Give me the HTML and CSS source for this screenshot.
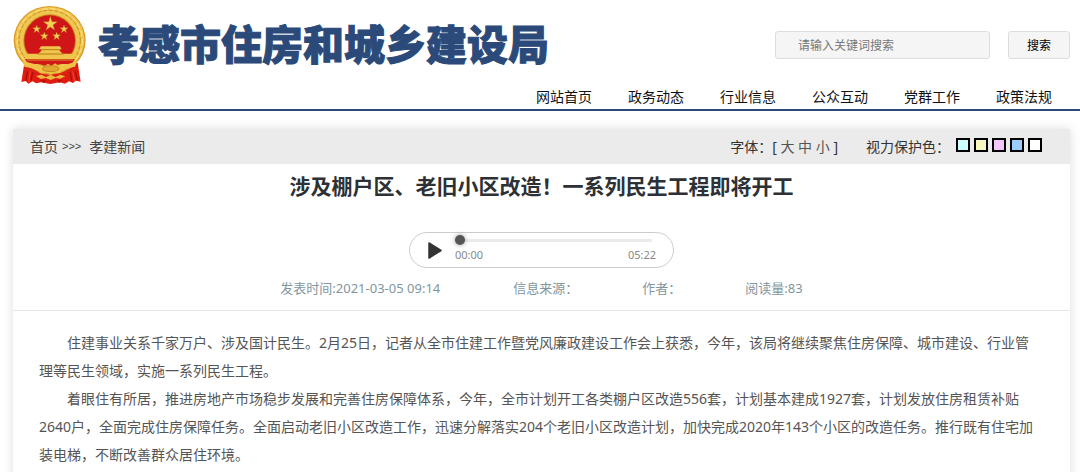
FILE: index.html
```html
<!DOCTYPE html>
<html lang="zh-CN">
<head>
    <meta charset="UTF-8">
    <meta name="viewport" content="width=device-width, initial-scale=1.0">
    <title>孝感市住房和城乡建设局</title>
    <link rel="stylesheet" href="styles.css">
</head>
<body>
    <header class="header">
        <div class="header-top">
            <a class="logo" href="#">
                <svg class="emblem" viewBox="38 13 228 240" aria-hidden="true">
                    <!-- ribbon -->
                    <path d="M72 188 L63 244 L76 241 L84 249 L96 242 L108 248 L122 245 L150 250 L178 245 L194 249 L206 242 L218 247 L226 240 L241 243 L232 186 Z" fill="#e01c12"/>
                    <path d="M84 202 L76 240 M98 210 L92 240 M208 208 L214 240 M222 200 L231 238" stroke="#a80f0d" stroke-width="4" fill="none"/>
                    <path d="M91 206 L85 244 M215 204 L223 242" stroke="#ff5a35" stroke-width="2" fill="none"/>
                    <!-- ring -->
                    <ellipse cx="148" cy="119" rx="108" ry="103" fill="#d99b25"/>
                    <ellipse cx="148" cy="118" rx="104" ry="99" fill="#f0c650"/>
                    <ellipse cx="148" cy="119" rx="92" ry="90" fill="none" stroke="#c98a20" stroke-width="3" stroke-dasharray="12 5"/>
                    <ellipse cx="148" cy="119" rx="98" ry="95" fill="none" stroke="#ffe288" stroke-width="3" stroke-dasharray="16 8"/>
                    <ellipse cx="148" cy="120" rx="79" ry="79" fill="#c88a1c"/>
                    <ellipse cx="148" cy="120" rx="76" ry="76" fill="#cf1517"/>
                    <!-- stars -->
                    <g fill="#f3cf55" stroke="#b97818" stroke-width="1">
                        <path d="M150 47 L155 63 L171 63 L158 73 L163 88 L150 79 L137 88 L142 73 L129 63 L145 63 Z"/>
                        <path d="M109 73 L112 81 L121 81 L114 87 L117 96 L109 90 L101 96 L104 87 L97 81 L106 81 Z"/>
                        <path d="M191 73 L194 81 L203 81 L196 87 L199 96 L191 90 L183 96 L186 87 L179 81 L188 81 Z"/>
                        <path d="M132 94 L135 102 L144 102 L137 108 L140 117 L132 111 L124 117 L127 108 L120 102 L129 102 Z"/>
                        <path d="M169 94 L172 102 L181 102 L174 108 L177 117 L169 111 L161 117 L164 108 L157 102 L166 102 Z"/>
                    </g>
                    <!-- gate -->
                    <path d="M122 137 H179 L184 146 H178 V150 L187 159 H223 V176 H74 V159 H114 L123 150 V146 H116 Z" fill="#efc54c"/>
                    <path d="M121 147 H180 M112 160 H190" stroke="#b87b18" stroke-width="3"/>
                    <path d="M74 175 H223 L215 190 H83 Z" fill="#d21717"/>
                    <path d="M80 178 H218" stroke="#d69a2b" stroke-width="3"/>
                    <!-- gear and knots -->
                    <path d="M66 181 Q92 187 114 193 L128 199 L143 189 L153 195 L165 188 L176 199 Q202 191 231 181 L224 198 Q201 202 188 207 L178 218 L164 215 L151 222 L137 215 L122 218 L112 207 Q94 201 73 199 Z" fill="#f0c247"/>
                    <ellipse cx="151" cy="204" rx="25" ry="9" fill="#e3a72f" stroke="#ad7014" stroke-width="2"/>
                    <path d="M73 199 Q110 204 119 221 L106 219 Q96 211 71 211 Z M226 199 Q195 206 183 221 L195 219 Q207 211 229 211 Z" fill="#db2016"/>
                    <path d="M107 226 L123 222 L137 229 L151 222 L166 229 L180 222 L195 227 L180 234 L166 232 L151 238 L136 232 L121 235 Z" fill="#e9b83f"/>
                    <path d="M119 238 L137 237 L131 248 M170 237 L187 238 L176 248" fill="#bc1310"/>
                </svg>
                <span class="logo-text">孝感市住房和城乡建设局</span>
            </a>
            <form class="search">
                <input class="search-input" type="text" placeholder="请输入关键词搜索" aria-label="请输入关键词搜索">
                <button class="search-btn" type="button">搜索</button>
            </form>
        </div>
        <nav class="nav">
            <a href="#">网站首页</a>
            <a href="#">政务动态</a>
            <a href="#">行业信息</a>
            <a href="#">公众互动</a>
            <a href="#">党群工作</a>
            <a href="#">政策法规</a>
        </nav>
    </header>

    <main class="container">
        <div class="toolbar">
            <div class="crumbs">
                <a href="#">首页</a>
                <span class="arrows">&gt;&gt;&gt;</span>
                <a href="#">孝建新闻</a>
            </div>
            <div class="tools">
                <div class="font-size">字体：[ <a href="#">大</a> <a href="#">中</a> <a href="#">小</a> ]</div>
                <div class="eye-care">
                    <span>视力保护色：</span>
                    <div class="swatches">
                        <button class="swatch cyan" type="button" aria-label="青色"></button>
                        <button class="swatch yellow" type="button" aria-label="黄色"></button>
                        <button class="swatch pink" type="button" aria-label="粉色"></button>
                        <button class="swatch blue" type="button" aria-label="蓝色"></button>
                        <button class="swatch white" type="button" aria-label="白色"></button>
                    </div>
                </div>
            </div>
        </div>

        <h1 class="title">涉及棚户区、老旧小区改造！一系列民生工程即将开工</h1>

        <div class="player">
            <button class="play" type="button" aria-label="播放">
                <svg viewBox="0 0 14 17" aria-hidden="true"><path d="M1 1 L13 8.5 L1 16 Z" fill="#333" stroke="#333" stroke-width="1.5" stroke-linejoin="round"/></svg>
            </button>
            <div class="progress">
                <input class="track" type="range" min="0" max="322" value="0" aria-label="播放进度">
                <div class="times"><span>00:00</span><span>05:22</span></div>
            </div>
        </div>

        <div class="meta">
            <span class="pub-time">发表时间:2021-03-05 09:14</span>
            <span>信息来源：</span>
            <span>作者：</span>
            <span>阅读量:83</span>
        </div>

        <article class="content">
            <p>住建事业关系千家万户、涉及国计民生。2月25日，记者从全市住建工作暨党风廉政建设工作会上获悉，今年，该局将继续聚焦住房保障、城市建设、行业管理等民生领域，实施一系列民生工程。</p>
            <p>着眼住有所居，推进房地产市场稳步发展和完善住房保障体系，今年，全市计划开工各类棚户区改造556套，计划基本建成1927套，计划发放住房租赁补贴2640户，全面完成住房保障任务。全面启动老旧小区改造工作，迅速分解落实204个老旧小区改造计划，加快完成2020年143个小区的改造任务。推行既有住宅加装电梯，不断改善群众居住环境。</p>
        </article>
    </main>
</body>
</html>
```
FILE: styles.css
```css
* {
    box-sizing: border-box;
}

body {
    margin: 0;
    background-color: #fff;
    color: #333;
    font-family: "Noto Sans", "Noto Sans CJK SC", sans-serif;
    font-size: 14px;
}

a {
    color: inherit;
    text-decoration: none;
}

button,
input {
    font-family: inherit;
    margin: 0;
}

.header {
    border-bottom: 2px solid #2b4a7a;
}

.header-top {
    display: flex;
    justify-content: space-between;
    align-items: center;
    padding: 5px 10px 0 13px;
}

.logo {
    display: flex;
    align-items: center;
    gap: 9px;
}

.emblem {
    width: 76px;
    height: 80px;
}

.logo-text {
    padding-bottom: 3px;
    color: #2b4a7a;
    font-size: 41px;
    font-weight: 900;
    line-height: 50px;
    -webkit-text-stroke: 1px #2b4a7a;
}

.search {
    display: flex;
    gap: 18px;
}

.search-input {
    width: 215px;
    height: 28px;
    padding: 0 22px;
    border: 1px solid #ddd;
    border-radius: 3px;
    background-color: #f5f5f5;
    font-size: 12px;
}

.search-input::placeholder {
    color: #777;
}

.search-btn {
    width: 62px;
    height: 28px;
    padding: 0;
    border: 1px solid #ddd;
    border-radius: 3px;
    background-color: #f5f5f5;
    color: #000;
    font-size: 12px;
}

.nav {
    display: flex;
    justify-content: flex-end;
    gap: 36px;
    padding: 0 28px;
    color: #111;
    line-height: 24px;
}

.container {
    margin: 18px 10px 0 13px;
    box-shadow: 0 0 10px #ddd;
}

.toolbar {
    display: flex;
    justify-content: space-between;
    align-items: center;
    padding: 0 28px 0 17px;
    background-color: #ebebeb;
    line-height: 35px;
}

.crumbs {
    display: flex;
    color: #444;
}

.arrows {
    margin: 0 8px 0 4px;
    font-family: "Liberation Sans", sans-serif;
    font-size: 11px;
}

.tools,
.eye-care,
.swatches {
    display: flex;
}

.tools {
    gap: 28px;
}

.font-size a {
    color: #555;
}

.eye-care {
    gap: 6px;
}

.swatches {
    gap: 4px;
    padding-top: 9px;
}

.swatch {
    width: 14px;
    height: 14px;
    padding: 0;
    border: 2px solid #000;
}

.cyan {
    background-color: #cff;
}

.yellow {
    background-color: #f9f7c0;
}

.pink {
    background-color: #f3c6fc;
}

.blue {
    background-color: #9cf;
}

.white {
    background-color: #fff;
}

.title {
    margin: 0;
    padding: 6px 20px 0;
    color: #2d3135;
    font-size: 21px;
    line-height: 32px;
    text-align: center;
}

.player {
    display: flex;
    width: 265px;
    height: 36px;
    margin: 30px auto 0;
    padding: 0 17px;
    gap: 12px;
    border: 1px solid #ccc;
    border-radius: 18px;
}

.play {
    width: 16px;
    padding: 0;
    border: 0;
    background: none;
}

.play svg {
    display: block;
    width: 16px;
    height: 17px;
}

.progress {
    flex: 1;
}

.track {
    display: block;
    width: 197px;
    height: 14px;
    appearance: none;
    background: linear-gradient(#ebebeb, #ebebeb) center / 100% 3px no-repeat;
}

.track::-webkit-slider-thumb {
    appearance: none;
    width: 10px;
    height: 10px;
    border-radius: 50%;
    background-color: #555;
    box-shadow: 0 0 5px #999;
}

.times {
    display: flex;
    justify-content: space-between;
    color: #888;
    font-size: 11px;
    line-height: 15px;
}

.meta {
    display: flex;
    justify-content: center;
    gap: 64px;
    padding-bottom: 11px;
    border-bottom: 1px solid #e6e6e6;
    margin-top: 9px;
    color: #8296a0;
    font-size: 13px;
    line-height: 22px;
}

.pub-time {
    margin-right: 9px;
}

.content {
    padding: 18px 28px 30px 26px;
    color: #555;
    line-height: 28px;
}

.content p {
    margin: 0;
    text-indent: 2em;
}
```
